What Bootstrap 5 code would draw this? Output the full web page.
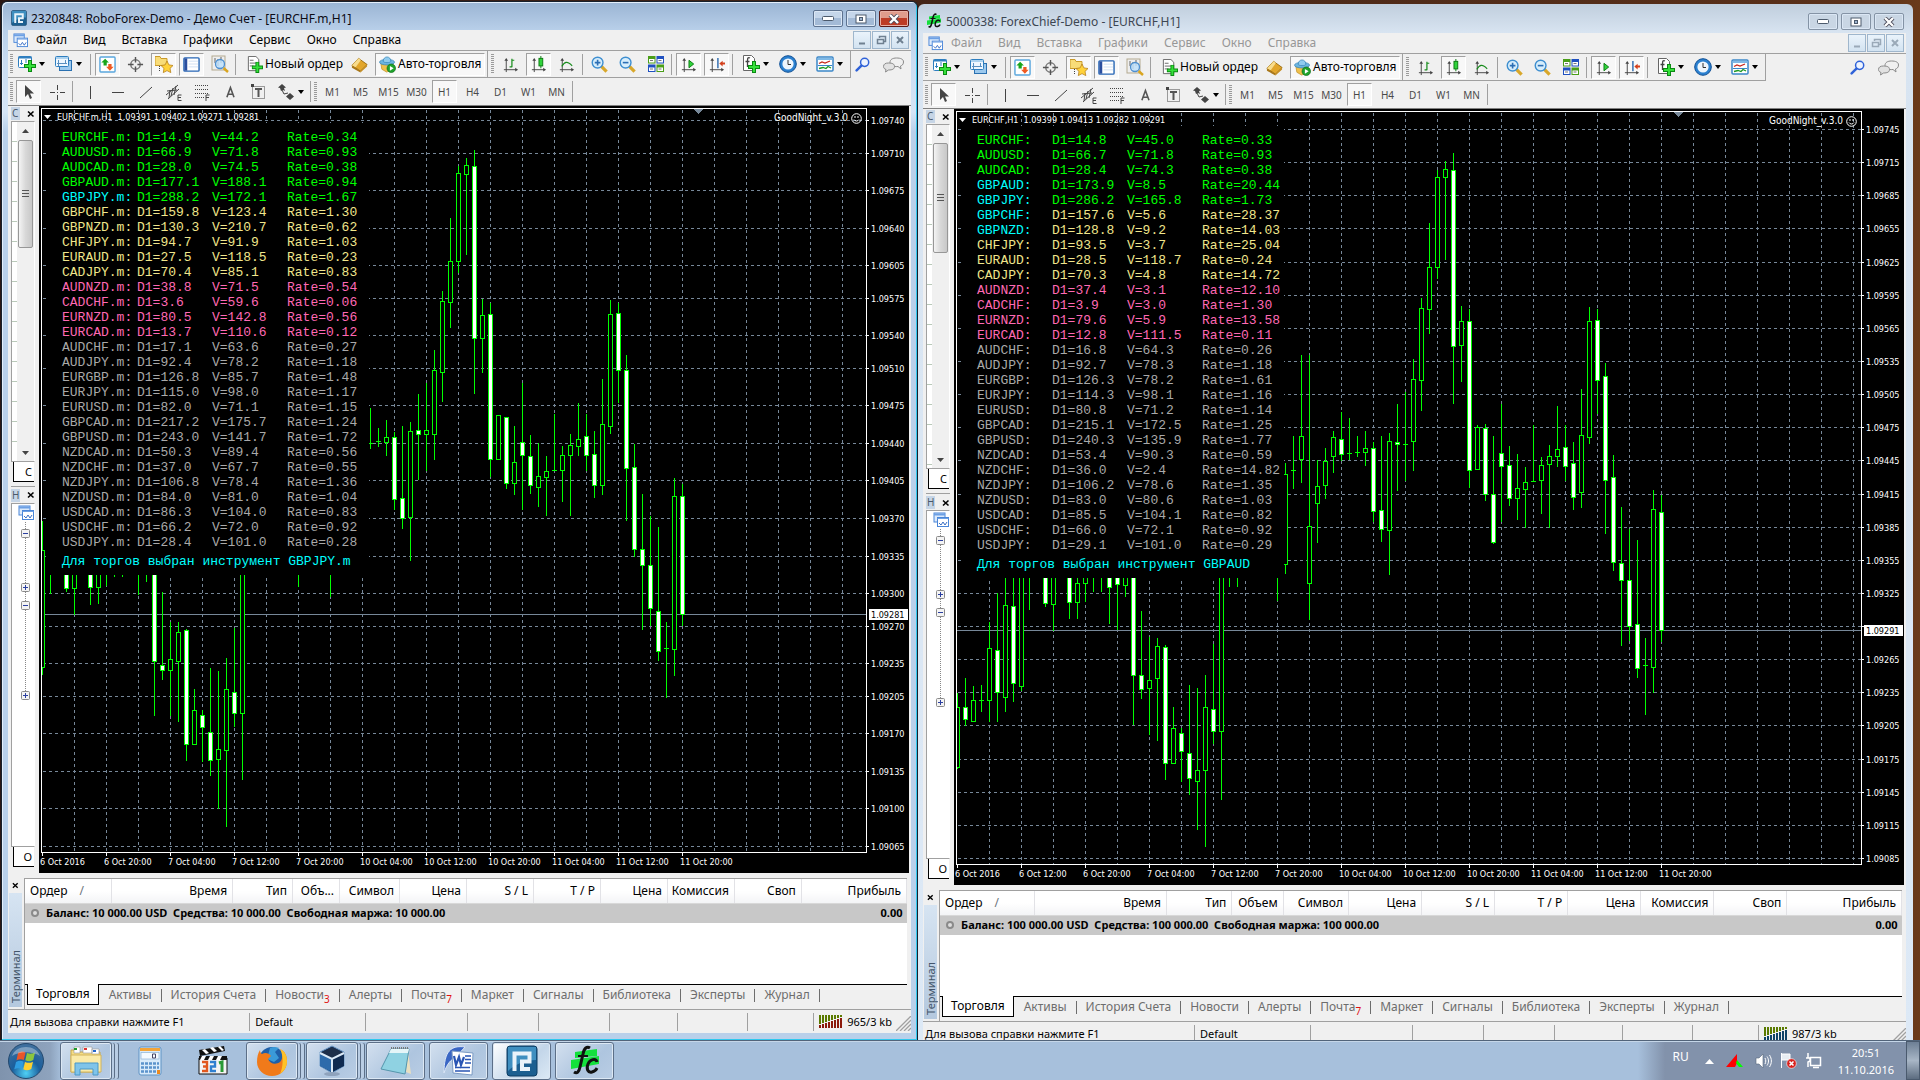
<!DOCTYPE html>
<html lang="ru">
<head>
<meta charset="utf-8">
<meta name="viewport" content="width=device-width, initial-scale=1">
<title>MetaTrader 4</title>
<link href="https://cdn.jsdelivr.net/npm/bootstrap@5.3.0/dist/css/bootstrap.min.css" rel="stylesheet">
<style>
:root{--ui:"Noto Sans","Open Sans",sans-serif;--line:#a0a0a0}
body{font-family:var(--ui);font-size:12px;line-height:16px;color:#000;background:#4c2817}
button{font-family:inherit;color:inherit;background:none;border:0;padding:0}
a{color:inherit;text-decoration:none}
svg{display:block;flex:none}
.desktop{background:linear-gradient(90deg,#2a1714 0,#4a2818 60%,#5a3019 97%,#6a3a1a 100%)}
.win{background:#bad0ea}
.win-a{left:1px;top:1px;bottom:40px;width:calc(47.8125% - 1px);padding:0 6px 7px 6px;border:1px solid #17202c;border-bottom:0;border-radius:6px 6px 0 0;box-shadow:inset -1px -1px 0 #2fc8ee,inset 1px 1px 0 #e4eefa;z-index:2;background:linear-gradient(#9ab4d3 0,#b9d0ea 29px,#c9dcf2 60px,#d6e5f6 110px,#b9d0ea 130px)}
.win-b{left:47.8125%;top:4px;right:7px;bottom:28px;padding:0 7px 7px 5px;border-radius:6px 6px 0 0;z-index:1;background:linear-gradient(#c0cedd 0,#d8e4f1 29px,#dde9f6 100%)}
.titlebar{height:28px;padding:4px 2px 0 3px}
.win-b .titlebar{height:29px;padding-top:5px}
.caption{font-size:12px;line-height:18px;color:#0b0b14}
.win-b .caption{color:#3d4652}
.capbtn{width:30px;height:17px;border:1px solid #5e7390;border-radius:2px;box-shadow:inset 0 0 0 1px #dbe7f5;background:linear-gradient(#c5d6ea 50%,#a3bad6 50%)}
.win-b .capbtn{background:#c9d6e4;border-color:#8493a5;box-shadow:inset 0 0 0 1px #dbe7f5}
.capbtn-x{background:linear-gradient(#e09c8c 50%,#bd3c26 50%);border-color:#5b1a18;box-shadow:inset 0 0 0 1px #e9b0a4}
.capbtns{gap:3px}
.win-body{background:#f0f0f0}
.menubar{height:21px;padding:0 2px 0 5px;border-bottom:1px solid var(--line)}
.menubar a{padding:0 8px;font-size:12px;line-height:20px}
.win-b .menubar a{color:#979797}
.mdi{gap:1px}
.mdibtn{width:18px;height:18px;border:1px solid #9fb6cc;background:linear-gradient(#eaf3fb,#d3e3f1);color:#6f8091}
.win-b .mdibtn{color:#9aa9b8}
.bar{height:27px;padding-left:2px;gap:3px}
.bar-cut{border-bottom:1px solid var(--line);border-right:1px solid var(--line);padding-right:2px}
.bar-cut+.bar-cut{padding-left:3px}
.bar-cut+.bar-cut .grip{margin-right:1px}
.side-tools{gap:12px;padding-right:6px}
.grip{width:3px;height:20px;background:repeating-linear-gradient(#9a9a9a 0 1px,#f0f0f0 1px 2px)}
.vsep{width:1px;height:21px;background:var(--line);margin-right:1px}
.tb{width:25px;height:23px;border:1px solid transparent;font-size:10px;color:#4a4a4a}
.tb.on{border-color:#a0a0a0 #fff #fff #a0a0a0;background:#f8f8f8}
.tb-drop{width:34px;height:23px;padding-left:2px;gap:3px}
.tb-txt{font-size:12px;color:#000;height:23px;gap:2px}
.tb-order{width:104px;padding-left:6px;white-space:nowrap}
.tb-auto{width:110px;padding-left:3px;border:1px solid;border-color:#a0a0a0 #fff #fff #a0a0a0;background:#f8f8f8;white-space:nowrap}
.caret{width:0;height:0;border:3px solid transparent;border-top:4px solid #000;border-bottom:0}
.work{border-top:1px solid #808080;padding-right:2px}
.dock{width:31px;padding:0 4px 6px 3px}
.dock-top{height:50%;border-bottom:1px solid var(--line);padding-bottom:4px}
.dock-low{padding-top:1px}
.dock-cap{height:15px;font-size:10px;line-height:13px}
.dock-cap span{background:#c6d5e6;color:#4c5a6c;width:9px;height:13px;padding-left:1px}
.dock-box{border:1px solid var(--line);border-right-color:#fff;background:#fff}
.vscroll{background:#f0f0f0;width:16px}
.thumb{height:32%;width:15px;border:1px solid #979797;border-radius:2px;background:linear-gradient(90deg,#f4f4f4,#d8d8d8 50%,#c8c8c8)}
.ticks{width:5px;background:repeating-linear-gradient(#fff 0 19px,#b9c9b9 19px 20px)}
.dock-tab{height:20px;width:21px;margin-left:2px;padding-right:2px;border-left:1px solid #000;border-bottom:1px solid #000;background:#fff;font-size:11px;line-height:19px}
.tree{background:repeating-linear-gradient(#888 0 1px,transparent 1px 2px) 13px 0/1px 100% no-repeat;height:175px;padding:7px 0 0 5px}
.tree svg{margin-bottom:9px}
.tree .tree-a{margin-bottom:45px}
.tree .tree-b{margin-bottom:81px}
.chart{background:#000}
.chart svg.plot{width:100%;height:100%;shape-rendering:crispEdges;position:absolute;left:0;top:0}
.plot text{font:9px "DejaVu Sans Condensed","DejaVu Sans",sans-serif;fill:#fff}
.plot text.hot{fill:#000}
.ch-name,.ch-ea,.rates{z-index:1}
.ch-name{left:5px;top:4px;font:9px/14px "DejaVu Sans Condensed","DejaVu Sans",sans-serif;color:#fff;gap:6px}
.ch-ea{right:47px;top:5px;font:10px/14px "DejaVu Sans Condensed","DejaVu Sans",sans-serif;color:#fff;gap:3px}
.rates{left:7px;top:17px;width:323px;padding:7px 0 0 16px;background:#000;color:#a9a9a9;font:13px/15px "Liberation Mono",monospace}
.rates td{padding:0;height:15px;width:75px;white-space:pre}
.rates p{margin:4px 0 6px;white-space:nowrap;color:#0ff}
.c-lime{color:#0f0}.c-aqua{color:#0ff}.c-khaki{color:#f0e68c}.c-pink{color:#ff69b4}.c-gray{color:#a9a9a9}
.terminal{height:136px;padding:5px 4px 0 1px}
.term-side{width:15px;padding:0 2px 2px 0}
.term-name{background:linear-gradient(#b4c8de,#d6e4f2);color:#44566b;font-size:11px;line-height:13px;writing-mode:vertical-rl;transform:rotate(180deg)}
.term-main{border-left:1px solid var(--line);border-top:1px solid var(--line)}
.trade{table-layout:fixed;width:100%}
.trade th{height:24px;font-weight:400;font-size:12px;line-height:16px;text-align:right;padding:0 5px 0 0;border-right:1px solid #e2e2e6;background:linear-gradient(#fff 50%,#f3f4f6);border-bottom:1px solid #d8d8d8;white-space:nowrap}
.trade th.th-first{text-align:left;padding-left:5px}
.trade td{height:20px;line-height:16px;padding:0 4px;background:#c8c8c8;font-weight:700;font-size:11px;white-space:pre}
.dot{width:8px;height:8px;border:2px solid #8a8a8a;border-radius:50%;background:#ddd;margin:0 7px 0 2px}
.tabs{height:25px;background:#f0f0f0;border-top:1px solid #000;color:#6d6d6d}
.tabs button{padding:0 9px 0 10px;height:20px;font-size:12px;line-height:18px;position:relative}
.tabs button+button:not(.t-first)::before{content:"";position:absolute;left:0;top:4px;height:13px;width:1px;background:#6d6d6d}
.tabs .t-on{background:#fff;color:#000;border:1px solid #000;border-top:0;margin:-1px 0 0 2px;height:21px;padding:0 8px}
.tabs sub{color:#e01010;font-size:10px;bottom:-4px}
.tabs .t-end{width:1px;height:13px;margin-top:4px;background:#6d6d6d}
.statusbar{height:24px;border-top:1px solid var(--line);font-size:11px}
.statusbar div+div{border-left:1px solid var(--line);height:18px}
.cell{padding-left:5px;line-height:18px;white-space:nowrap}
.st-help{flex:1 1 224px;padding-left:2px}
.st-net{flex:2 1 54px}
.taskbar{height:40px;z-index:3;border-top:1px solid #52647a;background:linear-gradient(90deg,#7f93ad 0,#8ea3bd 50px,#a7c0dc 62px,#a7c0dc 1638px,#8292ab 1665px,#8292ab 100%);box-shadow:inset 0 1px 0 #c5d6e8}
.task{height:38px;width:59px;border:1px solid #5c6f88;border-radius:3px;box-shadow:inset 0 0 0 1px #dce8f4;background:linear-gradient(135deg,#d3e0ef,#aec5df 60%,#b9cde4)}
.task.stack{width:52px;box-shadow:inset 0 0 0 1px #dce8f4,3px 0 0 -1px #b9cde4,4px 0 0 -1px #5c6f88,7px 0 0 -1px #b9cde4,8px 0 0 -1px #5c6f88;margin-right:8px}
.task.flat{border-color:transparent;background:none;box-shadow:none}
.task.cur{background:linear-gradient(135deg,#fff,#c3d6e9 60%,#dce9f5)}
.tray{color:#fff;font-size:12px;line-height:17px;gap:8px}
.clock{font-size:11px;padding:0 4px 0 8px}
.peek{width:14px;height:39px;border:1px solid #4a5a6e;background:linear-gradient(#6d7f95,#a8b6c6 50%,#5c6c80)}
</style>
</head>
<body>
<svg width="0" height="0" class="position-absolute">
<defs>
<symbol id="plus" viewBox="0 0 12 12"><path d="M4 0h4v4h4v4H8v4H4V8H0V4h4z" fill="#0a8a12"/><path d="M5 1h2v4h4v2H7v4H5V7H1V5h4z" fill="#35e03a"/></symbol>
<symbol id="i-new" viewBox="0 0 18 18"><rect x=".5" y="1.500" width="13" height="11" rx="1" fill="#fff" stroke="#2f7fc0"/><path d="M.5 2.500h13" stroke="#2f7fc0" stroke-width="2"/><path d="M3.500 5v5M2 8.500h3M8 4v4" stroke="#2f7fc0"/><use href="#plus" x="6" y="5" width="12" height="12"/></symbol>
<symbol id="i-prof" viewBox="0 0 18 18"><rect x="4.500" y="5.500" width="12" height="10" fill="#9cc9ee" stroke="#2a70b0"/><rect x=".5" y="1.500" width="13" height="10" rx="1" fill="#eef7ff" stroke="#2f7fc0"/><path d="M1 3h12" stroke="#6aaee0"/><path d="M2 8.500h10M3.500 5v6M10.500 5v4" stroke="#5a8fc0"/></symbol>
<symbol id="i-mw" viewBox="0 0 18 18"><rect x="1" y="1" width="16" height="16" rx="1" fill="#fff" stroke="#5aa7dd" stroke-width="1.500"/><path d="M6.500 3l4 4H8.200v3H4.800V7H2.500z" fill="#18a51c"/><path d="M11.500 15.500l4-4h-2.200v-3H9.800v3H7.500z" fill="#ef5a22"/></symbol>
<symbol id="i-cross" viewBox="0 0 18 18"><circle cx="9" cy="9" r="5" fill="none" stroke="#777" stroke-width="1.500"/><path d="M9 1v6M9 11v6M1 9h6M11 9h6" stroke="#555" stroke-width="1.500"/></symbol>
<symbol id="i-nav" viewBox="0 0 18 18"><path d="M0 1.500h5l1 2h6v7H0z" fill="#f8dc78" stroke="#c99a2c"/><path d="M4.500 11v6" stroke="#444" stroke-dasharray="1 1"/><path d="M12 6l1.900 3.900 4.100.6-3 2.900.8 4.200-3.800-2-3.700 2 .7-4.200-3-2.900 4.100-.6z" fill="#ffd23a" stroke="#b9821a" stroke-width=".8"/></symbol>
<symbol id="i-term" viewBox="0 0 18 18"><rect x="1" y="2" width="16" height="14" rx="1" fill="#fff" stroke="#2766b5" stroke-width="1.500"/><rect x="1.500" y="2.500" width="3" height="13" fill="#2a4e9e"/><path d="M6 5.500h10M6 8.500h10M6 11.500h10" stroke="#cfdff2"/></symbol>
<symbol id="i-test" viewBox="0 0 18 18"><rect x="1" y="1" width="13" height="14" fill="#eee" stroke="#b3a98f"/><path d="M4 3v5M7 4v7M10 2v6" stroke="#666"/><circle cx="9" cy="9" r="4.500" fill="#bfe1fa" fill-opacity=".85" stroke="#4d8fd0" stroke-width="1.300"/><path d="M12.500 13l4.500 4" stroke="#d9a520" stroke-width="2.500"/></symbol>
<symbol id="i-order" viewBox="0 0 18 18"><path d="M2.500.5h8l3 3v12h-11z" fill="#fff" stroke="#666"/><path d="M4 4.500h4M4 7.500h7M4 10.500h4" stroke="#666"/><use href="#plus" x="6" y="6" width="12" height="12"/></symbol>
<symbol id="i-meta" viewBox="0 0 18 18"><path d="M1 10l7-7.500 9 6.500-7 7z" fill="#e2a62c" stroke="#9a6c12"/><path d="M1 10l7-7.500 2.500 1.800L5 12z" fill="#f8dc8c"/><path d="M1 10v2.500l9 5V16z" fill="#a97718"/><path d="M17 9v2l-7 6.500V16z" fill="#c58c1e"/></symbol>
<symbol id="i-auto" viewBox="0 0 18 18"><path d="M2 8h13l-2 7-5 2-5-3z" fill="#f0c04c" stroke="#b98a1c" stroke-width=".7"/><ellipse cx="8.500" cy="6.500" rx="8" ry="3" fill="#6db5e0" stroke="#2e7fb5" stroke-width=".7"/><path d="M4.500 5.500c0-6 8-6 8 0 0 2-8 2-8 0z" fill="#8fcbee" stroke="#2e7fb5" stroke-width=".7"/><circle cx="13" cy="13" r="4.500" fill="#1ea32b" stroke="#0b6d16" stroke-width=".7"/><path d="M11.500 10.500l4 2.500-4 2.500z" fill="#fff"/></symbol>
<symbol id="ax" viewBox="0 0 18 18"><path d="M4.500 4v13M2 14.500h13" stroke="#444" fill="none"/><path d="M4.500 2l2 3h-4zM17 14.500l-3-2v4z" fill="#444"/></symbol>
<symbol id="i-bars" viewBox="0 0 18 18"><use href="#ax"/><path d="M10.500 3v9M8 11.500h2.500M10.500 4.500H13" stroke="#188c1c" stroke-width="1.300"/></symbol>
<symbol id="i-cndl" viewBox="0 0 18 18"><use href="#ax"/><path d="M11.500 0v13" stroke="#0a7a10"/><rect x="9.500" y="2.500" width="4" height="8" fill="#2fd33a" stroke="#0a7a10"/></symbol>
<symbol id="i-line" viewBox="0 0 18 18"><use href="#ax"/><path d="M4 11c3-5 6-6 11-.5" stroke="#188c1c" fill="none" stroke-width="1.200"/></symbol>
<symbol id="i-zin" viewBox="0 0 18 18"><path d="M11 11l5.500 5.500" stroke="#d8a72a" stroke-width="3.500"/><circle cx="7" cy="7" r="5.700" fill="#d7eefc" stroke="#3f8fd0" stroke-width="1.500"/><path d="M4 7h6M7 4v6" stroke="#2c6fb5" stroke-width="1.700"/></symbol>
<symbol id="i-zout" viewBox="0 0 18 18"><path d="M11 11l5.500 5.500" stroke="#d8a72a" stroke-width="3.500"/><circle cx="7" cy="7" r="5.700" fill="#d7eefc" stroke="#3f8fd0" stroke-width="1.500"/><path d="M4 7h6" stroke="#2c6fb5" stroke-width="1.700"/></symbol>
<symbol id="i-tile" viewBox="0 0 18 18"><path fill="#4a9e18" d="M1 1h7.500v7.500H1zM9.500 9.500H17V17H9.500z"/><path fill="#1f50c0" d="M9.500 1H17v7.500H9.500zM1 9.500h7.500V17H1z"/><path d="M2 4h5.500v3.500H2zM10.500 4H16v3.500h-5.500zM2 12.500h5.500V16H2zM10.500 12.500H16V16h-5.500z" fill="#fff"/><path d="M3 5.500h3M11.500 5.500h3M3 14h3M11.500 14h3" stroke="#777"/></symbol>
<symbol id="i-scr" viewBox="0 0 18 18"><use href="#ax"/><path d="M9.500 4.500l5 4-5 4z" fill="#2fd33a" stroke="#0a7a10"/></symbol>
<symbol id="i-shift" viewBox="0 0 18 18"><use href="#ax"/><path d="M10.500 2v11" stroke="#1c5fa8" stroke-width="1.400"/><path d="M12 8l3.500-3v2H18v2h-2.500v2z" fill="#d3401c"/></symbol>
<symbol id="i-ind" viewBox="0 0 18 18"><path d="M1.500.5h8l3 3v12h-11z" fill="#fff" stroke="#666"/><path d="M8 3c-2-1-2.500 0-2.500 3v6M3.500 6.500h4" stroke="#444" fill="none" stroke-width="1.300"/><use href="#plus" x="6" y="6" width="12" height="12"/></symbol>
<symbol id="i-clock" viewBox="0 0 18 18"><circle cx="9" cy="9" r="8.300" fill="#2a80d0" stroke="#0f4f94"/><circle cx="9" cy="9" r="5.600" fill="#eef6fd"/><path d="M9 5v4.500h3" stroke="#333" fill="none"/></symbol>
<symbol id="i-tmpl" viewBox="0 0 18 18"><rect x="1" y="2" width="16" height="14" rx="1" fill="#fff" stroke="#3a86c8" stroke-width="1.500"/><path d="M1.500 4h15" stroke="#7fb9e6" stroke-width="2"/><path d="M3 8.500l3-1.500 3 1 5-2" stroke="#c8281c" fill="none" stroke-width="1.300"/><path d="M2 10.500h14" stroke="#3a86c8"/><path d="M3 13.500l4-1 3 1 2-2 3 1.500" stroke="#1d9a24" fill="none" stroke-width="1.300"/></symbol>
<symbol id="i-find" viewBox="0 0 14 14"><circle cx="9" cy="5" r="3.800" fill="#eef4ff" stroke="#2f62d8" stroke-width="1.400"/><path d="M6 8l-4.500 4.500" stroke="#2f62d8" stroke-width="2.300" stroke-linecap="round"/></symbol>
<symbol id="i-chat" viewBox="0 0 22 18"><path d="M14 2c4 0 7 1 7 4s-2 3.500-3 4l.5 3-3-2.500c-5 .5-8-1-8-4S10 2 14 2z" fill="#f0f0f0" stroke="#8a8a8a"/><path d="M6 7c4 0 6 1 6 3.500S10 14 6 14l-3 2 .5-2.500C2 13 1 12 1 10.500 1 8 3 7 6 7z" fill="#e2e2e2" stroke="#8a8a8a"/></symbol>
<symbol id="i-cur" viewBox="0 0 18 18"><path d="M5 2v12l3-3 2 5 2-1-2-4.500h4z" fill="#444"/></symbol>
<symbol id="i-ch" viewBox="0 0 18 18"><path d="M9.500 2v5M9.500 12v5M2 9.500h5M12 9.500h5" stroke="#444"/><path d="M9 9h1v1H9z" fill="#444"/></symbol>
<symbol id="i-vl" viewBox="0 0 18 18"><path d="M9.500 3v13" stroke="#444"/></symbol>
<symbol id="i-hl" viewBox="0 0 18 18"><path d="M3 9.500h12" stroke="#444"/></symbol>
<symbol id="i-tl" viewBox="0 0 18 18"><path d="M3 15L15 4" stroke="#444"/></symbol>
<symbol id="i-eq" viewBox="0 0 18 18"><path d="M1 12L13 2M3 16L14 6M5 7l-1 8M8 5L6 13M11 3l-2 9M2 8l10-1" stroke="#444"/><path d="M16.500 12H13v5.500h3.500M13 14.500h3" stroke="#444" fill="none"/></symbol>
<symbol id="i-fibo" viewBox="0 0 18 18"><path d="M2 2.500h14M2 6.500h14M2 10.500h14M2 14.500h9" stroke="#444" stroke-dasharray="1 1"/><path d="M16.500 12H13v6M13 14.500h3" stroke="#444" fill="none"/></symbol>
<symbol id="i-A" viewBox="0 0 18 18"><path d="M5.500 15l4-11 4 11M7 11.500h5" stroke="#555" stroke-width="1.800" fill="none"/></symbol>
<symbol id="i-T" viewBox="0 0 18 18"><rect x="3.500" y="3.500" width="12" height="12" fill="none" stroke="#444" stroke-dasharray="1 1"/><path d="M6 6h7M9.500 6v8" stroke="#555" stroke-width="2"/><path d="M2 1h3v3H2z" fill="#444"/></symbol>
<symbol id="i-arr" viewBox="0 0 18 18"><path d="M5 1l4 3.500-2 .5 1 3-2-1-2 1-1-3-2-.5zM13 10l4 3.500-4 3.500-4-3.500z" fill="#444"/><path d="M5 7l2 4 4-1" stroke="#444" fill="none"/></symbol>
<symbol id="i-mdi" viewBox="0 0 16 16"><rect x="1" y="1" width="11" height="9" fill="#dceafb" stroke="#4a86d8"/><path d="M1 2.500h11" stroke="#6da0e4" stroke-width="2"/><rect x="4.500" y="5.500" width="11" height="9" fill="#fff" stroke="#4a86d8"/><path d="M4.500 6.500h11" stroke="#6da0e4"/><path d="M6 11l2 2 2-3 2 3 2-3" stroke="#3a6fc4" fill="none"/></symbol>
<symbol id="i-robo" viewBox="0 0 32 32"><rect x="1" y="1" width="30" height="30" rx="3" fill="#1c5f90" stroke="#0c3c62"/><path d="M2 2h28v13C18 15 8 20 2 26z" fill="#3f8fc0"/><path d="M8.500 26V8.500h15v8H16V24h8" fill="none" stroke="#e9f3fa" stroke-width="4"/></symbol>
<symbol id="i-fc" viewBox="0 0 32 32"><path d="M6 7l22-3v7L6 13zM2 15l28-4v8L2 24z" fill="#14e03c"/><path d="M21 3c-3-2-6 0-7 6l-3 13c-1 5-3 7-6 5" fill="none" stroke="#111" stroke-width="3"/><path d="M9 11h10" stroke="#111" stroke-width="2"/><path d="M28 17c-1-4-7-3-9 2s0 9 4 8 4-2 5-4" fill="none" stroke="#111" stroke-width="3"/></symbol>
<symbol id="i-minus" viewBox="0 0 9 9"><rect x=".5" y=".5" width="8" height="8" rx="1" fill="#f4f4f4" stroke="#8a8a8a"/><path d="M2 4.500h5" stroke="#2b3fa0"/></symbol>
<symbol id="i-pls" viewBox="0 0 9 9"><rect x=".5" y=".5" width="8" height="8" rx="1" fill="#f4f4f4" stroke="#8a8a8a"/><path d="M2 4.500h5M4.500 2v5" stroke="#2b3fa0"/></symbol>
<symbol id="i-x" viewBox="0 0 8 8"><path d="M1 1.500l5.500 5M6.500 1.500L1 6.500" stroke="#000" stroke-width="1.600"/></symbol>
<symbol id="i-size" viewBox="0 0 15 15"><path d="M0 15L15 0M4 15L15 4M8 15l7-7M12 15l3-3" stroke="#a0a0a0" stroke-width="1.300"/></symbol>
</defs>
</svg>

<template id="tpl-capbtns">
  <div class="d-flex ms-auto capbtns align-items-start pt-1">
    <button class="capbtn d-flex justify-content-center align-items-center" aria-label="Свернуть"><svg width="12" height="6"><rect x=".5" y=".5" width="11" height="4" rx="1" fill="#fff" stroke="#4c5a6c"/></svg></button>
    <button class="capbtn d-flex justify-content-center align-items-center" aria-label="Развернуть"><svg width="12" height="10"><rect x="1" y="1" width="10" height="8" fill="#fff" stroke="#4c5a6c"/><rect x="4.500" y="3.500" width="3" height="3" fill="#9db4d0" stroke="#4c5a6c"/></svg></button>
    <button class="capbtn capbtn-x d-flex justify-content-center align-items-center" aria-label="Закрыть"><svg width="12" height="10"><path d="M2 1l8 8M10 1L2 9" stroke="#4c4c5c" stroke-width="4"/><path d="M2 1l8 8M10 1L2 9" stroke="#fff" stroke-width="2.400"/></svg></button>
  </div>
</template>

<template id="tpl-bars">
  <nav class="menubar d-flex align-items-center">
    <svg class="me-1" width="15" height="15"><use href="#i-mdi"/></svg>
    <a href="#" class="ps-1">Файл</a><a href="#">Вид</a><a href="#">Вставка</a><a href="#">Графики</a><a href="#">Сервис</a><a href="#">Окно</a><a href="#">Справка</a>
    <div class="d-flex ms-auto mdi">
      <button class="mdibtn" aria-label="Свернуть график"><svg width="16" height="16"><path d="M5 11.500h6" stroke="currentColor" stroke-width="2"/></svg></button>
      <button class="mdibtn" aria-label="Восстановить график"><svg width="16" height="16"><path d="M6.500 6V4.500h6v5H11M4.500 7.500h6v4h-6zM6.500 4.500h6M4.500 7.500h6" stroke="currentColor" fill="none" stroke-width="1.500"/></svg></button>
      <button class="mdibtn" aria-label="Закрыть график"><svg width="16" height="16"><path d="M5 5l6 6M11 5l-6 6" stroke="currentColor" stroke-width="2"/></svg></button>
    </div>
  </nav>
  <div class="d-flex" role="toolbar" aria-label="Стандартная">
    <div class="bar bar-cut d-flex align-items-center">
      <span class="grip"></span>
      <button class="tb-drop d-flex align-items-center" aria-label="Новый график"><svg width="18" height="18"><use href="#i-new"/></svg><i class="caret"></i></button>
      <button class="tb-drop d-flex align-items-center" aria-label="Профили"><svg width="18" height="18"><use href="#i-prof"/></svg><i class="caret"></i></button>
      <span class="vsep"></span>
      <button class="tb on" aria-label="Обзор рынка"><svg class="mx-auto" width="17" height="17"><use href="#i-mw"/></svg></button>
      <button class="tb" aria-label="Окно данных"><svg class="mx-auto" width="17" height="17"><use href="#i-cross"/></svg></button>
      <button class="tb on" aria-label="Навигатор"><svg class="mx-auto" width="18" height="18"><use href="#i-nav"/></svg></button>
      <button class="tb on" aria-label="Терминал"><svg class="mx-auto" width="17" height="17"><use href="#i-term"/></svg></button>
      <button class="tb" aria-label="Тестер"><svg class="mx-auto" width="18" height="18"><use href="#i-test"/></svg></button>
      <span class="vsep"></span>
      <button class="tb-txt tb-order d-flex align-items-center"><svg width="17" height="17"><use href="#i-order"/></svg>Новый ордер</button>
      <button class="tb" aria-label="MetaEditor"><svg class="mx-auto" width="17" height="17"><use href="#i-meta"/></svg></button>
      <button class="tb-txt tb-auto d-flex align-items-center"><svg width="17" height="17"><use href="#i-auto"/></svg>Авто-торговля</button>
    </div>
    <div class="bar bar-cut d-flex align-items-center">
      <span class="grip"></span>
      <button class="tb" aria-label="Бары"><svg class="mx-auto" width="17" height="17"><use href="#i-bars"/></svg></button>
      <button class="tb on" aria-label="Свечи"><svg class="mx-auto" width="17" height="17"><use href="#i-cndl"/></svg></button>
      <button class="tb" aria-label="Линия"><svg class="mx-auto" width="17" height="17"><use href="#i-line"/></svg></button>
      <span class="vsep"></span>
      <button class="tb" aria-label="Увеличить"><svg class="mx-auto" width="17" height="17"><use href="#i-zin"/></svg></button>
      <button class="tb" aria-label="Уменьшить"><svg class="mx-auto" width="17" height="17"><use href="#i-zout"/></svg></button>
      <button class="tb" aria-label="Мозаика"><svg class="mx-auto" width="18" height="18"><use href="#i-tile"/></svg></button>
      <span class="vsep"></span>
      <button class="tb on" aria-label="Автопрокрутка"><svg class="mx-auto" width="17" height="17"><use href="#i-scr"/></svg></button>
      <button class="tb on" aria-label="Сдвиг графика"><svg class="mx-auto" width="17" height="17"><use href="#i-shift"/></svg></button>
      <span class="vsep me-1"></span>
      <button class="tb-drop d-flex align-items-center" aria-label="Индикаторы"><svg width="18" height="18"><use href="#i-ind"/></svg><i class="caret"></i></button>
      <button class="tb-drop d-flex align-items-center" aria-label="Периоды"><svg width="18" height="18"><use href="#i-clock"/></svg><i class="caret"></i></button>
      <button class="tb-drop d-flex align-items-center" aria-label="Шаблоны"><svg width="18" height="18"><use href="#i-tmpl"/></svg><i class="caret"></i></button>
    </div>
    <div class="d-flex ms-auto align-items-center side-tools">
      <button aria-label="Поиск"><svg width="15" height="15"><use href="#i-find"/></svg></button>
      <button aria-label="Чат"><svg width="23" height="18"><use href="#i-chat"/></svg></button>
    </div>
  </div>
  <div class="bar d-flex align-items-center" role="toolbar" aria-label="Графические инструменты">
    <span class="grip"></span>
    <button class="tb on" aria-label="Курсор"><svg class="mx-auto" width="18" height="18"><use href="#i-cur"/></svg></button>
    <button class="tb" aria-label="Перекрестие"><svg class="mx-auto" width="18" height="18"><use href="#i-ch"/></svg></button>
    <span class="vsep"></span>
    <button class="tb" aria-label="Вертикальная линия"><svg class="mx-auto" width="18" height="18"><use href="#i-vl"/></svg></button>
    <button class="tb" aria-label="Горизонтальная линия"><svg class="mx-auto" width="18" height="18"><use href="#i-hl"/></svg></button>
    <button class="tb" aria-label="Трендовая линия"><svg class="mx-auto" width="18" height="18"><use href="#i-tl"/></svg></button>
    <button class="tb" aria-label="Канал"><svg class="mx-auto" width="18" height="18"><use href="#i-eq"/></svg></button>
    <button class="tb" aria-label="Фибоначчи"><svg class="mx-auto" width="18" height="18"><use href="#i-fibo"/></svg></button>
    <button class="tb" aria-label="Текст"><svg class="mx-auto" width="16" height="16"><use href="#i-A"/></svg></button>
    <button class="tb" aria-label="Метка"><svg class="mx-auto" width="18" height="18"><use href="#i-T"/></svg></button>
    <button class="tb-drop d-flex align-items-center ps-1" aria-label="Стрелки"><svg width="18" height="18"><use href="#i-arr"/></svg><i class="caret"></i></button>
    <span class="vsep me-0"></span>
    <span class="grip"></span>
    <button class="tb">M1</button><button class="tb">M5</button><button class="tb">M15</button><button class="tb">M30</button><button class="tb on">H1</button><button class="tb">H4</button><button class="tb">D1</button><button class="tb">W1</button><button class="tb">MN</button>
    <span class="vsep"></span>
  </div>
</template>

<template id="tpl-dock">
  <div class="dock-top d-flex flex-column">
    <div class="dock-cap d-flex align-items-center justify-content-between"><span>C</span><svg width="8" height="8"><use href="#i-x"/></svg></div>
    <div class="dock-box d-flex flex-grow-1">
      <div class="ticks"></div>
      <div class="vscroll d-flex flex-column align-items-center flex-grow-1">
        <svg width="9" height="18"><path d="M1 11l3.500-4 3.500 4z" fill="#444"/></svg>
        <div class="thumb d-flex align-items-center justify-content-center"><svg width="7" height="8"><path d="M0 .5h7M0 3.500h7M0 6.500h7" stroke="#555"/></svg></div>
        <svg class="mt-auto" width="9" height="18"><path d="M1 8l3.500 4L8 8z" fill="#444"/></svg>
      </div>
    </div>
    <div class="dock-tab text-end">C</div>
  </div>
  <div class="dock-low d-flex flex-column flex-grow-1">
    <div class="dock-cap d-flex align-items-center justify-content-between"><span>H</span><svg width="8" height="8"><use href="#i-x"/></svg></div>
    <div class="dock-box flex-grow-1">
      <svg class="ms-auto" width="16" height="18"><use href="#i-mdi"/></svg>
      <div class="tree d-flex flex-column align-items-center">
        <svg class="tree-a" width="9" height="9"><use href="#i-minus"/></svg>
        <svg width="9" height="9"><use href="#i-pls"/></svg>
        <svg class="tree-b" width="9" height="9"><use href="#i-minus"/></svg>
        <svg width="9" height="9"><use href="#i-pls"/></svg>
      </div>
    </div>
    <div class="dock-tab text-end">O</div>
  </div>
</template>

<main class="desktop position-relative vh-100 overflow-hidden">

<section class="win win-a position-absolute d-flex flex-column" aria-label="RoboForex-Demo">
  <header class="titlebar d-flex align-items-start gap-1"><svg class="mt-1" width="16" height="16"><use href="#i-robo"/></svg><span class="caption mt-1">2320848: RoboForex-Demo - Демо Счет - [EURCHF.m,H1]</span><div data-tpl="tpl-capbtns" class="ms-auto"></div></header>
  <div class="win-body d-flex flex-column flex-grow-1">
    <div data-tpl="tpl-bars"></div>
    <div class="work d-flex flex-grow-1">
      <aside class="dock d-flex flex-column" data-tpl="tpl-dock"></aside>
      <div class="chart position-relative flex-grow-1" id="chart-a">
        <div class="ch-name position-absolute d-flex align-items-center text-nowrap"><svg width="7" height="4"><path d="M0 0h7L3.500 4z" fill="#fff"/></svg><span>EURCHF.m,H1&nbsp; 1.09391 1.09402 1.09271 1.09281</span></div>
        <div class="ch-ea position-absolute d-flex align-items-center">GoodNight_v.3.0<svg width="11" height="11"><circle cx="5.500" cy="5.500" r="4.800" fill="none" stroke="#fff"/><path d="M4 3v2M7 3v2M3 6.500c1 2 4 2 5 0" stroke="#fff" fill="none"/></svg></div>
        <div class="rates position-absolute"><table><tbody></tbody></table><p>Для торгов выбран инструмент GBPJPY.m</p></div>
      </div>
    </div>
    <div class="terminal d-flex">
      <div class="term-side d-flex flex-column align-items-center"><button aria-label="Закрыть терминал"><svg class="m-1" width="7" height="7"><use href="#i-x"/></svg></button><div class="term-name flex-grow-1 pt-1">Терминал</div></div>
      <div class="term-main flex-grow-1 d-flex flex-column bg-white">
        <table class="trade"><colgroup><col style="width:9.86%"><col style="width:13.7%"><col style="width:6.8%"><col style="width:5.33%"><col style="width:6.8%"><col span="6" style="width:7.6%"><col></colgroup>
          <thead><tr><th class="th-first">Ордер<span class="ms-2 ps-1 text-secondary">/</span></th><th>Время</th><th>Тип</th><th>Объ...</th><th>Символ</th><th>Цена</th><th>S / L</th><th>T / P</th><th>Цена</th><th>Комиссия</th><th>Своп</th><th>Прибыль</th></tr></thead>
          <tbody><tr><td colspan="11"><span class="dot d-inline-block"></span>Баланс: 10 000.00 USD  Средства: 10 000.00  Свободная маржа: 10 000.00</td><td class="text-end">0.00</td></tr></tbody></table>
        <div class="tabs d-flex mt-auto align-items-start" role="tablist"><button class="t-on">Торговля</button><button class="t-first">Активы</button><button>История Счета</button><button>Новости<sub>3</sub></button><button>Алерты</button><button>Почта<sub>7</sub></button><button>Маркет</button><button>Сигналы</button><button>Библиотека</button><button>Эксперты</button><button>Журнал</button><span class="t-end"></span></div>
      </div>
    </div>
    <footer class="statusbar d-flex align-items-center" data-net="#8c1a0c">965/3 kb</footer>
  </div>
</section>

<section class="win win-b position-absolute d-flex flex-column" aria-label="ForexChief-Demo">
  <header class="titlebar d-flex align-items-start gap-1"><svg class="mt-1" width="16" height="16"><use href="#i-fc"/></svg><span class="caption mt-1">5000338: ForexChief-Demo - [EURCHF,H1]</span><div data-tpl="tpl-capbtns" class="ms-auto"></div></header>
  <div class="win-body d-flex flex-column flex-grow-1">
    <div data-tpl="tpl-bars"></div>
    <div class="work d-flex flex-grow-1">
      <aside class="dock d-flex flex-column" data-tpl="tpl-dock"></aside>
      <div class="chart position-relative flex-grow-1" id="chart-b">
        <div class="ch-name position-absolute d-flex align-items-center text-nowrap"><svg width="7" height="4"><path d="M0 0h7L3.500 4z" fill="#fff"/></svg><span>EURCHF,H1&nbsp; 1.09399 1.09413 1.09282 1.09291</span></div>
        <div class="ch-ea position-absolute d-flex align-items-center">GoodNight_v.3.0<svg width="11" height="11"><circle cx="5.500" cy="5.500" r="4.800" fill="none" stroke="#fff"/><path d="M4 3v2M7 3v2M3 6.500c1 2 4 2 5 0" stroke="#fff" fill="none"/></svg></div>
        <div class="rates position-absolute"><table><tbody></tbody></table><p>Для торгов выбран инструмент GBPAUD</p></div>
      </div>
    </div>
    <div class="terminal d-flex">
      <div class="term-side d-flex flex-column align-items-center"><button aria-label="Закрыть терминал"><svg class="m-1" width="7" height="7"><use href="#i-x"/></svg></button><div class="term-name flex-grow-1 pt-1">Терминал</div></div>
      <div class="term-main flex-grow-1 d-flex flex-column bg-white">
        <table class="trade"><colgroup><col style="width:9.86%"><col style="width:13.7%"><col style="width:6.8%"><col style="width:5.33%"><col style="width:6.8%"><col span="6" style="width:7.6%"><col></colgroup>
          <thead><tr><th class="th-first">Ордер<span class="ms-2 ps-1 text-secondary">/</span></th><th>Время</th><th>Тип</th><th>Объем</th><th>Символ</th><th>Цена</th><th>S / L</th><th>T / P</th><th>Цена</th><th>Комиссия</th><th>Своп</th><th>Прибыль</th></tr></thead>
          <tbody><tr><td colspan="11"><span class="dot d-inline-block"></span>Баланс: 100 000.00 USD  Средства: 100 000.00  Свободная маржа: 100 000.00</td><td class="text-end">0.00</td></tr></tbody></table>
        <div class="tabs d-flex mt-auto align-items-start" role="tablist"><button class="t-on">Торговля</button><button class="t-first">Активы</button><button>История Счета</button><button>Новости</button><button>Алерты</button><button>Почта<sub>7</sub></button><button>Маркет</button><button>Сигналы</button><button>Библиотека</button><button>Эксперты</button><button>Журнал</button><span class="t-end"></span></div>
      </div>
    </div>
    <footer class="statusbar d-flex align-items-center" data-net="#0f4468">987/3 kb</footer>
  </div>
</section>

<nav class="taskbar position-absolute bottom-0 start-0 end-0 d-flex align-items-center" aria-label="Панель задач">
  <button class="ms-2 me-3" aria-label="Пуск"><svg width="36" height="36" viewBox="0 0 36 36"><defs><radialGradient id="orb" cx=".5" cy=".85" r=".8"><stop offset="0" stop-color="#4fd0f5"/><stop offset=".5" stop-color="#1b5f9c"/><stop offset="1" stop-color="#3e6f9e"/></radialGradient></defs><circle cx="18" cy="18" r="17.500" fill="url(#orb)" stroke="#24496e"/><path d="M10 10c3-2 5-2 7.500-.5L15.800 17c-2.500-1-4.500-1-7.300.3z" fill="#e8562a"/><path d="M19 10c3 1 5 1 8-.5L25.300 17c-3 1.500-5 1.500-8 .3z" fill="#8cc63f"/><path d="M8 19c3-1.500 5-1.500 7.500-.3L13.800 26c-2.500-1-5-1-7.500.3z" fill="#2f9de0"/><path d="M17 19c3 1.200 5 1.200 8-.3L23.300 26c-3 1.500-5.500 1.500-8 .3z" fill="#ffd02f"/><path d="M4 13C8 1 28 1 32 13 24 8 12 8 4 13z" fill="#fff" fill-opacity=".35"/></svg></button>
  <button class="task stack d-flex justify-content-center align-items-center" aria-label="Проводник"><svg width="32" height="30" viewBox="0 0 32 30"><path d="M1 4h7l2 2h20v20H1z" fill="#f4dc84" stroke="#c8a84c"/><path d="M4 1h6v6H4zM13 1h9v6h-9zM22 3h7v5h-7z" fill="#fff" stroke="#999" stroke-width=".6"/><path d="M4 2h3v2H4z" fill="#1a9a2a"/><path d="M14 2h3v2h-3z" fill="#d33"/><path d="M23 4h3v2h-3z" fill="#26c"/><path d="M1 9h30v17H1z" fill="#faeaa8" stroke="#d2b45c"/><path d="M5 29V17h23v12h-5v-6H10v6z" fill="#7fc4ea" stroke="#4a98c8"/></svg></button>
  <button class="task flat d-flex justify-content-center align-items-center" aria-label="Калькулятор"><svg width="24" height="30" viewBox="0 0 24 30"><rect x="1" y="1" width="22" height="28" rx="2" fill="#d8eafa" stroke="#5f93c4"/><rect x="2" y="2" width="20" height="3" fill="#f3a53a"/><rect x="3" y="6.500" width="18" height="6.500" fill="#f4faff" stroke="#7fa9cf" stroke-width=".6"/><path d="M14.500 8h3v4h-3z" fill="none" stroke="#446"/><path d="M3 17.500h18M3 21.500h18M3 25.500h15" stroke="#5b93cc" stroke-width="2.600" stroke-dasharray="3 1"/><path d="M19 24h3v4h-3z" fill="#ee8a1d"/></svg></button>
  <button class="task flat d-flex justify-content-center align-items-center ms-1" aria-label="Плеер 321"><svg width="32" height="32" viewBox="0 0 32 32"><path d="M2 13h28v16H2z" fill="#f4f4f4" stroke="#111"/><path d="M2 5L27 1l1 5L3 11z" fill="#111"/><path d="M5 5l4 4 3-1-4-4zM13 3l4 4 3-1-4-4zM21 2l4 4 2-1-4-4z" fill="#fff"/><path d="M2 11h28v4H2z" fill="#111"/><path d="M5 11h4l-2 4H3zM13 11h4l-2 4h-4zM21 11h4l-2 4h-4z" fill="#fff"/><path d="M5 17h5v9H5M6 21.500h4" fill="none" stroke="#e2571e" stroke-width="2.400"/><path d="M13 17h5v4.500h-4V26h5" fill="none" stroke="#2f7fd0" stroke-width="2.400"/><path d="M22 18l3-1v10" fill="none" stroke="#2a9a36" stroke-width="3"/></svg></button>
  <button class="task stack d-flex justify-content-center align-items-center ms-1" aria-label="Firefox"><svg width="32" height="32" viewBox="0 0 32 32"><circle cx="16" cy="15" r="13" fill="#1f5fa8"/><path d="M14 3c4-2 9 0 9 0l-4 4 4 6-5 4-7-3z" fill="#3a9ad8"/><path d="M4 5c0 3 2 4 2 4 3-2 7-1 9 2l-3 3c2 5 8 6 12 3 3-3 3-9 0-13 5 2 7 7 7 12 0 9-7 15-15 15S1 25 1 17C1 12 2 8 4 5z" fill="#f07a1a"/><path d="M24 4c5 2 7 7 7 12 0 6-3 10-7 13 3-6 4-18 0-25z" fill="#ffc227"/></svg></button>
  <button class="task stack d-flex justify-content-center align-items-center" aria-label="VirtualBox"><svg width="30" height="32" viewBox="0 0 30 32"><path d="M15 1l12 6v14l-12 7L3 21V7z" fill="#173a66" stroke="#6f9ac6"/><path d="M15 2l11 5.500L15 13 4 7.500z" fill="#1d2f4a"/><path d="M3 8l12 6v13L3 21z" fill="#2d6bab"/><path d="M15 14l12-6v13l-12 6z" fill="#0f2a50"/><path d="M3 8l12 6 12-6M15 14v13" stroke="#dbe9f6" stroke-width="2" fill="none"/><ellipse cx="15" cy="29" rx="8" ry="2" fill="#8ea2bc"/></svg></button>
  <button class="task d-flex justify-content-center align-items-center me-1" aria-label="Блокнот"><svg width="32" height="32" viewBox="0 0 32 32"><path d="M28 6l3 23-5-2z" fill="#e9dfc0"/><path d="M11 4h18l-4 25L1 24z" fill="#8fd2e2" stroke="#5596ac"/><path d="M11 4h18l-1 4H9z" fill="#e4f5f8"/><path d="M11 3h17" stroke="#777" stroke-width="2" stroke-dasharray="1 1"/></svg></button>
  <button class="task d-flex justify-content-center align-items-center me-1" aria-label="Word"><svg width="32" height="32" viewBox="0 0 32 32"><path d="M22 2C8 0 1 6 1 28c3-10 8-14 10-14z" fill="#3a66c4" stroke="#dbe6f6"/><path d="M9 6l21 2-1 22-19-2z" fill="#fff" stroke="#7a9ac4"/><path d="M11 11l2 9 3-8 2 8 3-8" fill="none" stroke="#2a56b4" stroke-width="2.200"/><path d="M22 11h6M22 14.500h6M22 18h6M12 22.500h15M12 26h15" stroke="#2a56b4" stroke-width="1.600"/></svg></button>
  <button class="task cur d-flex justify-content-center align-items-center me-1" aria-label="RoboForex"><svg width="32" height="32"><use href="#i-robo"/></svg></button>
  <button class="task d-flex justify-content-center align-items-center" aria-label="ForexChief"><svg width="32" height="32"><use href="#i-fc"/></svg></button>
  <div class="tray d-flex align-items-center ms-auto h-100">
    <span class="pb-2 me-2">RU</span>
    <svg class="me-1" width="9" height="6"><path d="M0 6l4.500-5L9 6z" fill="#fff"/></svg>
    <svg class="me-1" width="17" height="14"><path d="M0 13L11 0v9l-2 4z" fill="#f00"/><path d="M11 6l6 7h-4l-3-4z" fill="#0f0"/></svg>
    <svg width="17" height="16"><path d="M1 5h3l4-4v14l-4-4H1z" fill="#fff" stroke="#55647a" stroke-width=".6"/><path d="M10 5c1 2 1 4 0 6M12 3.500c2 3 2 6 0 9M14.500 2c2.500 4 2.500 8 0 12" stroke="#fff" fill="none"/></svg>
    <svg width="17" height="17"><path d="M1.500 1v15M2 2h8v6H2" fill="#e8edf3" stroke="#fff"/><circle cx="11.500" cy="11.500" r="4.800" fill="#d8201c" stroke="#fff" stroke-width=".6"/><path d="M9.500 9.500l4 4M13.500 9.500l-4 4" stroke="#fff" stroke-width="1.600"/></svg>
    <svg width="17" height="16"><path d="M5.500 4.500h10v8h-10zM8 14.500h6M3 0v5M1 5h4v3l-2 1v5" fill="none" stroke="#fff" stroke-width="1.500"/></svg>
    <div class="text-center clock">20:51<br>11.10.2016</div>
    <button class="peek" aria-label="Свернуть все окна"></button>
  </div>
</nav>
</main>

<script src="https://cdn.jsdelivr.net/npm/bootstrap@5.3.0/dist/js/bootstrap.bundle.min.js"></script>
<script>
document.querySelectorAll('[data-tpl]').forEach(el => el.append(document.getElementById(el.dataset.tpl).content.cloneNode(true)));

/* status bar cells: the first and the last one stretch */
document.querySelectorAll('.statusbar').forEach(bar => {
  const traffic = bar.textContent, c = bar.dataset.net;
  let net = '';
  for (let i = 0; i < 8; i++) net += `<path d="M${i * 3 + 1} 0v${9 - i}" stroke="#5a7a00" stroke-width="2"/><path d="M${i * 3 + 1} ${10 - i}V13" stroke="${c}" stroke-width="2"/>`;
  bar.innerHTML = '<div class="cell st-help">Для вызова справки нажмите F1</div><div class="cell" style="width:116px">Default</div>' +
    [102, 71, 71, 68, 70, 66].map(w => `<div style="width:${w}px"></div>`).join('') +
    `<div class="cell st-net d-flex align-items-center gap-1"><svg width="24" height="13">${net}</svg>${traffic}<svg class="ms-auto align-self-end" width="15" height="15"><use href="#i-size"/></svg></div>`;
});

/* rates: D1, V, Rate for each symbol */
const L = 'lime', A = 'aqua', K = 'khaki', P = 'pink', G = 'gray';
const names = ['EURCHF','AUDUSD','AUDCAD','GBPAUD','GBPJPY','GBPCHF','GBPNZD','CHFJPY','EURAUD','CADJPY','AUDNZD','CADCHF','EURNZD','EURCAD','AUDCHF','AUDJPY','EURGBP','EURJPY','EURUSD','GBPCAD','GBPUSD','NZDCAD','NZDCHF','NZDJPY','NZDUSD','USDCAD','USDCHF','USDJPY'];
const tone = i => i < 5 ? L : i < 10 ? K : i < 14 ? P : G;
const ratesA = '14.9 44.2 0.34,66.9 71.8 0.93,28.0 74.5 0.38,177.1 188.1 0.94,288.2 172.1 1.67,159.8 123.4 1.30,130.3 210.7 0.62,94.7 91.9 1.03,27.5 118.5 0.23,70.4 85.1 0.83,38.8 71.5 0.54,3.6 59.6 0.06,80.5 142.8 0.56,13.7 110.6 0.12,17.1 63.6 0.27,92.4 78.2 1.18,126.8 85.7 1.48,115.0 98.0 1.17,82.0 71.1 1.15,217.2 175.7 1.24,243.0 141.7 1.72,50.3 89.4 0.56,37.0 67.7 0.55,106.8 78.4 1.36,84.0 81.0 1.04,86.3 104.0 0.83,66.2 72.0 0.92,28.4 101.0 0.28';
const ratesB = '14.8 45.0 0.33,66.7 71.8 0.93,28.4 74.3 0.38,173.9 8.5 20.44,286.2 165.8 1.73,157.6 5.6 28.37,128.8 9.2 14.03,93.5 3.7 25.04,28.5 118.7 0.24,70.3 4.8 14.72,37.4 3.1 12.10,3.9 3.0 1.30,79.6 5.9 13.58,12.8 111.5 0.11,16.8 64.3 0.26,92.7 78.3 1.18,126.3 78.2 1.61,114.3 98.1 1.16,80.8 71.2 1.14,215.1 172.5 1.25,240.3 135.9 1.77,53.4 90.3 0.59,36.0 2.4 14.82,106.2 78.6 1.35,83.0 80.6 1.03,85.5 104.1 0.82,66.0 72.1 0.92,29.1 101.0 0.29';
function fillRates(id, data, suffix, picked) {
  document.querySelector(id + ' tbody').innerHTML = data.split(',').map((r, i) => {
    const [d, v, q] = r.split(' '), t = tone(i);
    return `<tr class="c-${t}"><td class="c-${picked.includes(names[i]) ? A : t}">${names[i]}${suffix}:</td><td>D1=${d}</td><td>V=${v}</td><td>Rate=${q}</td></tr>`;
  }).join('');
}
fillRates('#chart-a', ratesA, '.m', ['GBPJPY']);
fillRates('#chart-b', ratesB, '', ['GBPAUD', 'GBPJPY', 'GBPCHF', 'GBPNZD']);

/* candles: x, high, body top, body bottom, low, kind (1 bearish, 0 bullish, 2 wick only) */
const candlesA = [[42,521,550,667,674,0],[50,560,560,560,594,2],[66,560,562,588,591,1],[74,560,562,588,614,0],[90,560,562,587,604,1],[98,560,562,587,603,0],[106,560,560,560,586,2],[114,560,560,560,577,2],[122,560,560,560,577,2],[138,560,560,560,595,2],[146,560,560,560,582,2],[154,560,562,661,715,1],[162,592,665,670,679,1],[170,622,659,670,715,0],[178,622,632,661,721,0],[186,629,630,744,760,1],[194,689,710,744,744,0],[202,710,715,727,761,1],[210,668,732,760,775,1],[218,671,749,759,808,0],[226,658,689,750,826,0],[234,628,692,713,726,1],[242,560,560,713,779,0],[298,560,560,560,587,2],[330,560,560,560,597,2],
[370,408,443,443,448,0],[378,428,441,441,446,0],[386,420,437,442,455,0],[394,432,437,499,509,1],[402,426,498,518,528,1],[410,422,431,517,560,0],[418,394,430,434,479,1],[426,383,430,434,470,0],[434,350,370,434,459,0],[442,291,301,372,401,0],[450,218,261,302,327,0],[458,166,173,261,272,0],[466,158,165,174,254,0],[474,150,166,338,393,1],[482,299,315,338,372,0],[490,303,314,459,476,1],[498,415,415,459,459,0],[506,417,417,483,488,1],[514,426,462,483,494,0],[522,383,442,455,509,1],[530,435,456,485,493,1],[538,443,476,487,506,0],[546,456,471,477,515,0],[554,414,470,470,470,0],[562,446,455,470,501,0],[570,434,445,455,515,0],[578,403,439,446,455,0],[586,414,436,455,470,1],[594,431,454,485,497,1],[602,379,424,485,494,0],[610,300,314,426,433,0],[618,303,313,370,402,1],[626,355,370,468,520,1],[634,444,467,549,556,1],[642,494,549,565,629,1],[650,516,565,608,625,1],[658,527,611,651,660,1],[666,622,648,648,697,0],[674,478,496,649,675,0],[682,484,496,614,625,1]];
const candlesB = [[957,693,707,767,768,0],[965,678,707,719,725,1],[973,686,700,721,721,0],[981,685,700,700,711,0],[989,622,648,700,721,0],[997,593,650,692,721,1],[1005,560,605,697,711,0],[1013,560,606,683,701,1],[1021,560,560,686,690,0],[1029,560,560,560,610,2],[1045,560,560,603,606,1],[1053,560,560,604,630,0],[1069,560,560,602,618,1],[1077,560,583,602,618,0],[1085,560,560,583,601,0],[1093,560,560,560,592,2],[1101,560,560,560,592,2],[1109,560,560,587,623,1],[1117,560,560,584,629,1],[1125,560,560,585,596,0],[1133,560,560,675,724,1],[1141,611,675,689,698,1],[1149,637,680,688,734,0],[1157,638,646,678,740,0],[1165,645,647,763,779,1],[1173,707,728,763,763,0],[1181,728,733,751,781,1],[1189,685,753,778,794,1],[1197,688,770,781,829,0],[1205,675,707,770,846,0],[1213,644,709,731,743,1],[1221,560,560,731,799,0],[1229,560,560,560,587,2],[1237,560,560,560,587,2],[1277,560,560,560,601,2],
[1285,463,474,564,573,0],[1293,436,470,470,488,0],[1301,355,436,459,482,0],[1309,355,526,583,619,0],[1317,460,486,503,542,0],[1325,448,461,485,498,0],[1333,431,437,456,472,0],[1341,412,439,454,460,1],[1349,418,453,453,459,0],[1357,436,452,452,456,0],[1365,431,448,452,465,0],[1373,442,448,511,521,1],[1381,436,510,529,541,1],[1389,433,441,530,574,0],[1397,404,442,444,490,1],[1405,392,444,444,480,0],[1413,359,379,441,470,0],[1421,298,308,380,410,0],[1429,223,267,309,333,0],[1437,170,177,267,278,0],[1445,161,169,177,259,0],[1453,153,170,346,403,1],[1461,306,321,345,381,0],[1469,309,321,470,487,1],[1477,425,427,469,469,0],[1485,424,428,494,500,1],[1493,436,494,542,543,1],[1501,404,453,466,521,1],[1509,446,465,498,505,1],[1517,454,488,498,519,0],[1525,467,482,489,527,0],[1533,425,481,481,481,0],[1541,457,465,480,513,0],[1549,445,456,464,527,0],[1557,406,449,456,466,0],[1565,425,447,466,480,1],[1573,442,463,497,509,1],[1581,389,435,492,507,0],[1589,307,321,437,443,0],[1597,309,320,380,413,1],[1605,363,376,480,533,1],[1613,455,477,562,570,1],[1621,507,563,580,645,1],[1629,529,580,626,640,1],[1637,540,624,668,677,1],[1645,638,665,665,714,0],[1653,490,509,667,692,0],[1661,495,512,630,641,1]];

function drawChart(id, o) {
  const box = document.querySelector(id), w = box.clientWidth, h = box.clientHeight;
  const X = x => x - o.x0, Y = y => y - o.y0;
  const right = w - 43, bottom = h - 21;
  let s = `<clipPath id="${id.slice(1)}-clip"><rect x="2" y="2" width="${right - 1}" height="${bottom - 1}"/></clipPath>`;
  const dash = 'stroke="#778899" stroke-dasharray="3 3"';
  for (let x = 35; x < right; x += 32) s += `<path d="M${x + .5} 4V${bottom}" ${dash}/>`;
  o.levels.forEach(([y, label]) => {
    s += `<path d="M4 ${Y(y) + .5}H${right}" ${dash}/><path d="M${right} ${Y(y) + .5}h3" stroke="#fff"/>`;
    /* a level that the current price tag would cover gets no label */
    if (Math.abs(y - o.priceY) > 8) s += `<text x="${right + 5}" y="${Y(y) + 4}">${label}</text>`;
  });
  s += `<path d="M2 ${Y(o.priceY) + .5}H${right}" stroke="#778899"/>`;
  s += `<path d="M${o.mark - 5} 3h10l-5 5z" fill="#778899"/>`;
  s += `<g clip-path="url(#${id.slice(1)}-clip)" stroke="#0f0">`;
  o.candles.forEach(([x, hi, t, b, lo, k]) => {
    const cx = X(x) + .5;
    if (k === 2) { s += `<path d="M${cx} ${Y(hi)}V${Y(lo)}"/>`; return; }
    s += `<path d="M${cx} ${Y(hi)}V${Y(t)}M${cx} ${Y(b)}V${Y(lo) + 1}"/>`;
    s += t === b ? `<path d="M${cx - 2.5} ${Y(t) + .5}h5"/>` : `<rect x="${cx - 2}" y="${Y(t) + .5}" width="4" height="${b - t}" fill="${k ? '#fff' : '#000'}"/>`;
  });
  s += '</g>';
  s += `<path d="M2.500 ${bottom + .5}V2.500H${right + .5}V${bottom + .5}z" fill="none" stroke="#fff"/>`;
  o.times.forEach((t, i) => {
    const x = 3 + i * 64;
    s += `<path d="M${x + .5} ${bottom}v4" stroke="#fff"/><text x="${x - 2}" y="${bottom + 13}">${t}</text>`;
  });
  s += `<rect x="${right + 3}" y="${Y(o.priceY) - 5}" width="39" height="11" fill="#fff"/><text class="hot" x="${right + 5}" y="${Y(o.priceY) + 4}">${o.price}</text>`;
  box.insertAdjacentHTML('afterbegin', `<svg class="plot">${s}</svg>`);
}
const zip = (ys, ls) => ys.map((y, i) => [y, '1.09' + ls[i]]);
drawChart('#chart-a', {x0:39, y0:106, priceY:614, price:'1.09281', mark:659, candles:candlesA,
  levels:zip([120,153,190,228,265,298,335,368,405,443,480,518,556,593,626,663,696,733,771,808,846],['740','710','675','640','605','575','540','510','475','440','405','370','335','300','270','235','205','170','135','100','065']),
  times:['6 Oct 2016','6 Oct 20:00','7 Oct 04:00','7 Oct 12:00','7 Oct 20:00','10 Oct 04:00','10 Oct 12:00','10 Oct 20:00','11 Oct 04:00','11 Oct 12:00','11 Oct 20:00']});
drawChart('#chart-b', {x0:954, y0:109, priceY:630, price:'1.09291', mark:724, candles:candlesB,
  levels:zip([129,162,195,228,262,295,328,361,394,427,460,494,527,560,593,626,659,692,725,759,792,825,858],['745','715','685','655','625','595','565','535','505','475','445','415','385','355','325','295','265','235','205','175','145','115','085']),
  times:['6 Oct 2016','6 Oct 12:00','6 Oct 20:00','7 Oct 04:00','7 Oct 12:00','7 Oct 20:00','10 Oct 04:00','10 Oct 12:00','10 Oct 20:00','11 Oct 04:00','11 Oct 12:00','11 Oct 20:00']});
</script>
</body>
</html>
